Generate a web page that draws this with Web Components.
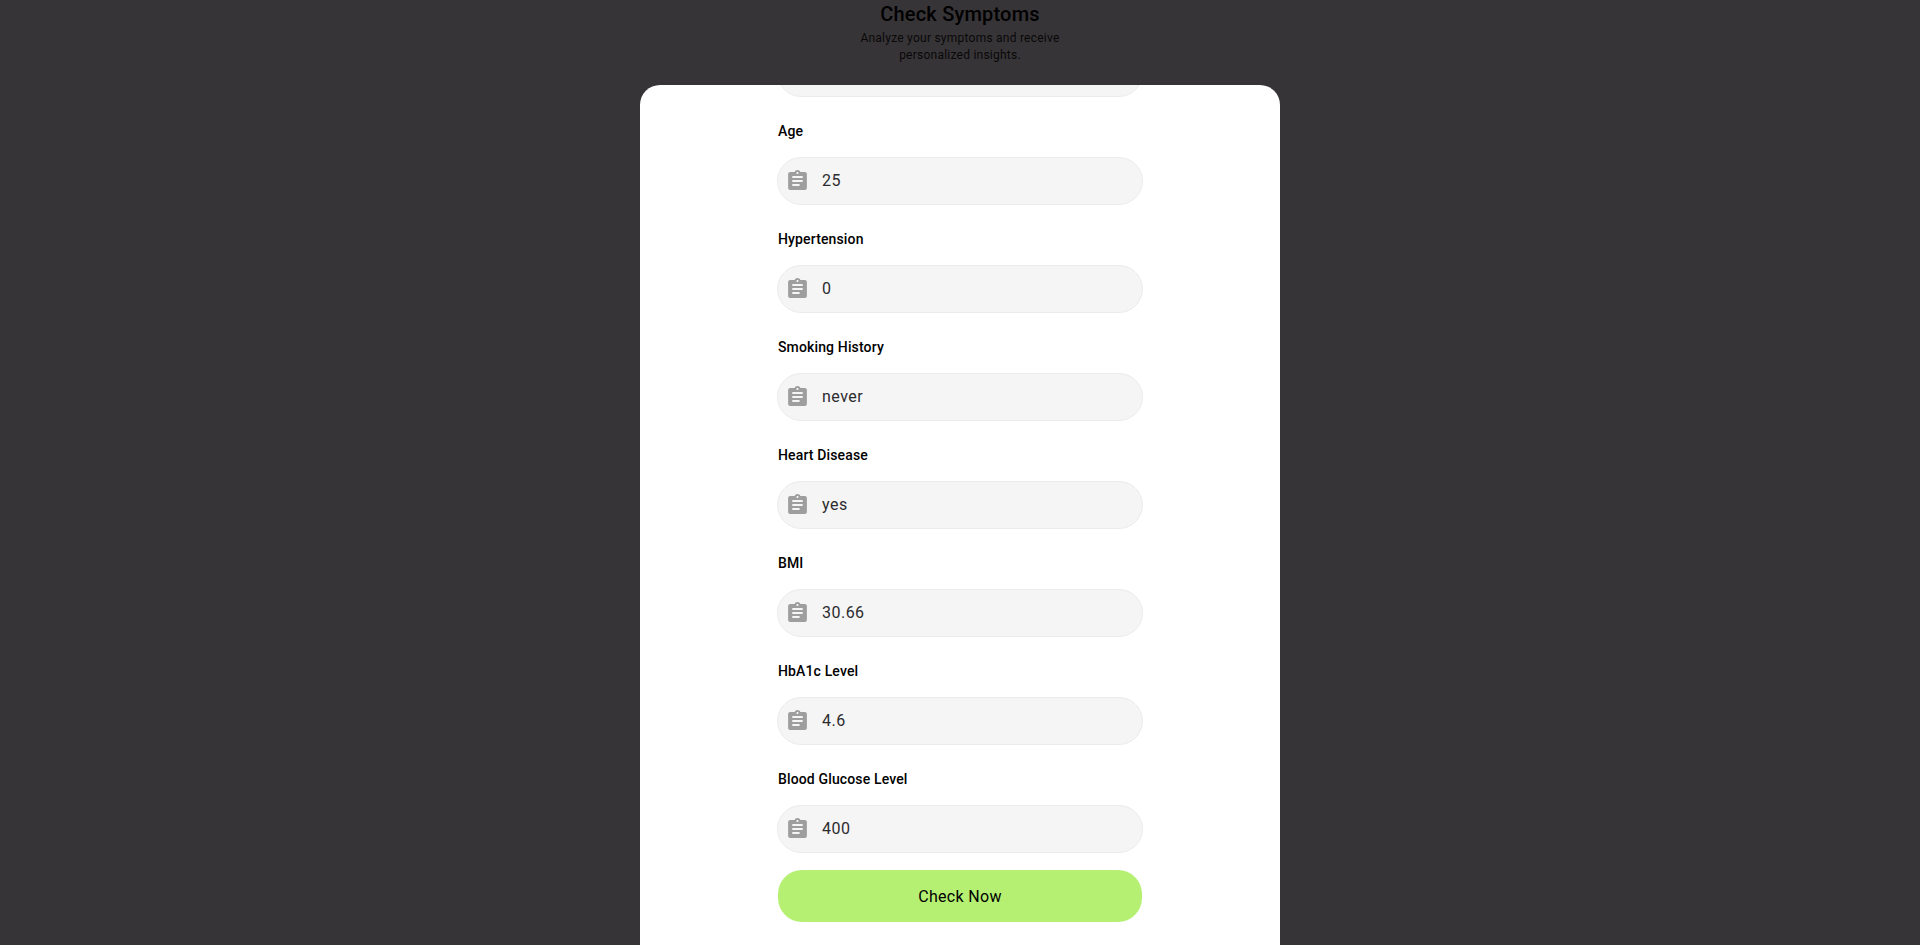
<!DOCTYPE html>
<html lang="en">
<head>
<meta charset="utf-8">
<title>Check Symptoms</title>
<style>
  body { margin: 0; font-family: Roboto, sans-serif; }
</style>
</head>
<body>
<symptom-page>
  <page-heading slot="heading">
    <span slot="title">Check Symptoms</span>
    Analyze your symptoms and receive personalized insights.
  </page-heading>
  <symptom-sheet>
    <symptom-field name="gender" label=""></symptom-field>
    <symptom-field name="age" label="Age" value="25"></symptom-field>
    <symptom-field name="hypertension" label="Hypertension" value="0"></symptom-field>
    <symptom-field name="smoking" label="Smoking History" value="never"></symptom-field>
    <symptom-field name="heart" label="Heart Disease" value="yes"></symptom-field>
    <symptom-field name="bmi" label="BMI" value="30.66"></symptom-field>
    <symptom-field name="hba1c" label="HbA1c Level" value="4.6"></symptom-field>
    <symptom-field name="glucose" label="Blood Glucose Level" value="400"></symptom-field>
    <action-button slot="action">Check Now</action-button>
  </symptom-sheet>
</symptom-page>
<script>
  function define(name, html, setup) {
    const template = document.createElement('template');
    template.innerHTML = html;
    customElements.define(name, class extends HTMLElement {
      constructor() {
        super();
        this.attachShadow({ mode: 'open' }).append(template.content.cloneNode(true));
      }
      connectedCallback() {
        if (setup) setup(this, this.shadowRoot);
      }
    });
  }

  define('symptom-page', `
    <style>
      :host { display: flex; flex-direction: column; height: 100vh; overflow: hidden; background: #373437; }
      header { flex: none; padding-bottom: 21px; }
      main { flex: 1; min-height: 0; display: flex; justify-content: center; }
    </style>
    <header><slot name="heading"></slot></header>
    <main><slot></slot></main>`);

  define('page-heading', `
    <style>
      :host { display: flex; flex-direction: column; align-items: center; text-align: center; color: #000; }
      h1 { margin: 0; padding-bottom: 2px; font-size: 20px; line-height: 28px; font-weight: 500; letter-spacing: 0.01em; }
      p { margin: 0; max-width: 208px; font-size: 12px; line-height: 17px; letter-spacing: 0.02em; color: #080808; }
    </style>
    <h1><slot name="title"></slot></h1>
    <p><slot></slot></p>`);

  /* Content is anchored to the bottom edge, so the earlier fields slide under the rounded top. */
  define('symptom-sheet', `
    <style>
      :host {
        display: flex; flex-direction: column; justify-content: flex-end; align-items: center;
        box-sizing: border-box; width: 100%; max-width: 640px; padding-bottom: 23px;
        overflow: hidden; background: #fff; border-radius: 20px 20px 0 0;
      }
      form { display: flex; flex-direction: column; width: 366px; max-width: 90%; }
      .action { padding: 17px 1px 0; }
    </style>
    <form onsubmit="return false">
      <slot></slot>
      <div class="action"><slot name="action"></slot></div>
    </form>`);

  define('symptom-field', `
    <style>
      :host { display: block; }
      label { display: block; height: 20px; padding: 24px 0 16px 1px; font-size: 14px; line-height: 20px; font-weight: 500; letter-spacing: 0.01em; color: #000; }
      .box {
        display: flex; align-items: center; gap: 12px; box-sizing: border-box; height: 48px; padding: 0 16px 0 7px;
        background: #f5f5f5; border: 1px solid #ebebeb; border-radius: 24px;
      }
      svg { flex: none; width: 25px; height: 24px; fill: #9e9e9e; }
      input {
        flex: 1; min-width: 0; padding: 0; border: 0; outline: 0; background: none;
        font: 400 16px/24px Roboto, sans-serif; letter-spacing: 0.03em; color: #2c2b2e;
      }
    </style>
    <label for="value"></label>
    <div class="box">
      <svg viewBox="0 0 24 24" preserveAspectRatio="none" aria-hidden="true"><path d="M19 3h-4.18C14.4 1.84 13.3 1 12 1c-1.3 0-2.4.84-2.82 2H5c-1.1 0-2 .9-2 2v14c0 1.1.9 2 2 2h14c1.1 0 2-.9 2-2V5c0-1.1-.9-2-2-2zm-7 0c.55 0 1 .45 1 1s-.45 1-1 1-1-.45-1-1 .45-1 1-1zm2 14H7v-2h7v2zm3-4H7v-2h10v2zm0-4H7V7h10v2z"/></svg>
      <input id="value" type="text">
    </div>`, (host, root) => {
      const input = root.querySelector('input');
      root.querySelector('label').textContent = host.getAttribute('label') || '';
      input.name = host.getAttribute('name');
      input.value = host.getAttribute('value') || '';
    });

  define('action-button', `
    <style>
      :host { display: block; }
      button {
        display: block; width: 100%; height: 52px; padding: 2px 0 0; border: 0; border-radius: 24px;
        background: #b5f073; color: #000; font: 400 16px/24px Roboto, sans-serif; letter-spacing: 0.02em; cursor: pointer;
      }
    </style>
    <button type="button"><slot></slot></button>`);
</script>
</body>
</html>
